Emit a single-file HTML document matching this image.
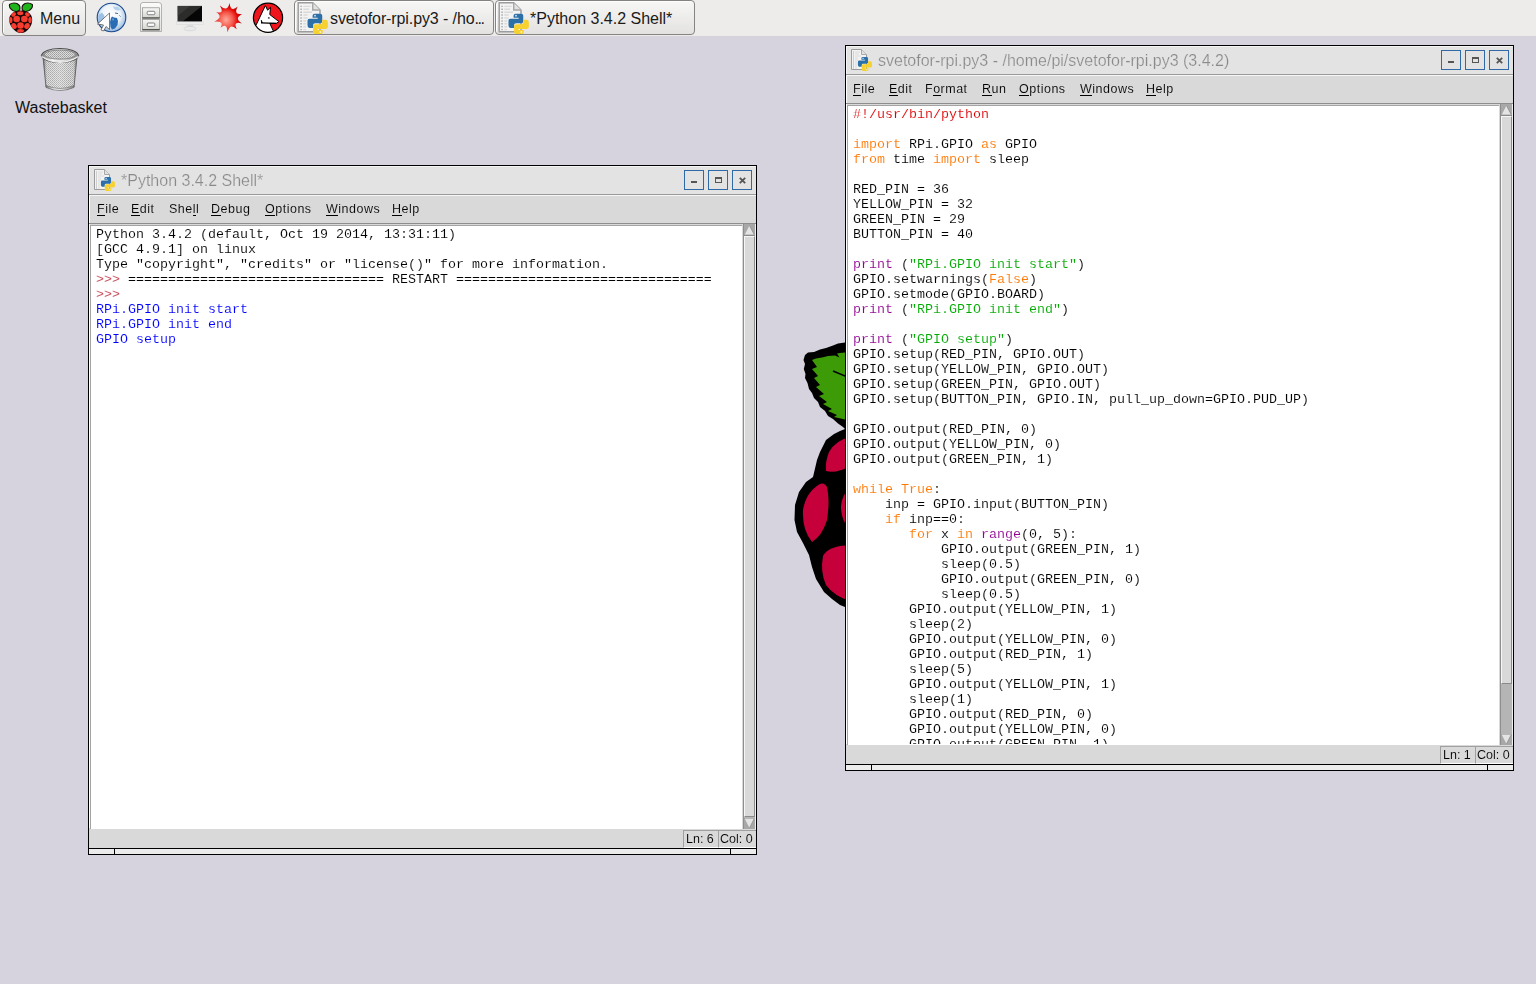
<!DOCTYPE html>
<html><head><meta charset="utf-8"><style>
*{margin:0;padding:0;box-sizing:border-box}
html,body{width:1536px;height:984px;overflow:hidden;background:#d6d3de;font-family:"Liberation Sans",sans-serif}
body{position:relative}
div,span,svg,pre{position:absolute}
#panel{left:0;top:0;width:1536px;height:36px;background:#edeceb}
.btn{border:1px solid #858483;border-radius:4px;background:linear-gradient(#f7f7f6,#e3e2e0);box-shadow:inset 1px 1px 0 #fdfdfd}
.ptxt{font-size:16px;color:#1a1a1a;white-space:nowrap}
.ttxt{font-size:16px;color:#8a8a8a;white-space:nowrap;-webkit-text-stroke:0.2px #e3e3e3;will-change:transform}
.wb{width:20px;height:20px;border:1px solid #2f6aa6}
.menu{font-size:12.5px;letter-spacing:0.5px;color:#000;white-space:nowrap;line-height:15px;-webkit-text-stroke:0.1px #d9d9d9;will-change:transform}
.menu u{text-decoration:none;background:linear-gradient(#000,#000) no-repeat 0 12.5px/100% 1px}
pre{font-family:"Liberation Mono",monospace;font-size:13.333px;line-height:15px;color:#000;white-space:pre;-webkit-text-stroke:0.1px #fff;will-change:transform}
.k{color:#ff7700}.b{color:#900090}.s{color:#00aa00}.c{color:#dd0000}.o{color:#0000ff}.p{color:#c03848}
.stat{font-size:12.5px;color:#000;white-space:nowrap;line-height:15px;-webkit-text-stroke:0.1px #d9d9d9;will-change:transform}
</style></head><body>

<div id="panel"></div>
<div class="btn" style="left:2px;top:0px;width:84px;height:36px"></div>
<svg style="left:8px;top:2px" width="26" height="32" viewBox="0 0 26 32">
 <path d="M1.5 2.5Q5 0 9 1.5Q12 3 12 6Q12 9 9 9.5Q5 9.5 3 7Q1 5 1.5 2.5Z" fill="#1db41d" stroke="#201010" stroke-width="1.1"/>
 <path d="M24.3 2.5Q21 0 17 1.5Q14 3 14 6Q14 9 17 9.5Q21 9.5 23 7Q25 5 24.3 2.5Z" fill="#1db41d" stroke="#201010" stroke-width="1.1"/>
 <path d="M13 8.5C19 8.5 24.5 11.5 24.2 18C24 24 21 27 18 29.5C16 31 14.5 31 13 31S10 31 8 29.5C5 27 1.5 24 1.2 18C1 11.5 7 8.5 13 8.5Z" fill="#1a0808"/>
 <g fill="#f53c2e"><ellipse cx="12.3" cy="11.3" rx="3.12" ry="1.98" transform="rotate(0 12.3 11.3)"/><ellipse cx="5.6" cy="12.6" rx="2.60" ry="1.88" transform="rotate(-35 5.6 12.6)"/><ellipse cx="19.4" cy="12.6" rx="2.60" ry="1.88" transform="rotate(35 19.4 12.6)"/><ellipse cx="8.7" cy="17" rx="3.33" ry="3.33" transform="rotate(0 8.7 17)"/><ellipse cx="16.4" cy="17" rx="3.33" ry="3.33" transform="rotate(0 16.4 17)"/><ellipse cx="2.7" cy="18" rx="1.77" ry="3.12" transform="rotate(0 2.7 18)"/><ellipse cx="22" cy="18" rx="1.77" ry="3.12" transform="rotate(0 22 18)"/><ellipse cx="12.5" cy="23.5" rx="3.33" ry="3.33" transform="rotate(0 12.5 23.5)"/><ellipse cx="6" cy="24" rx="2.60" ry="3.12" transform="rotate(-30 6 24)"/><ellipse cx="19" cy="24" rx="2.60" ry="3.12" transform="rotate(30 19 24)"/><ellipse cx="12.5" cy="28.8" rx="3.44" ry="1.88" transform="rotate(0 12.5 28.8)"/></g>
</svg>
<span class="ptxt" style="left:40px;top:10px">Menu</span>

<svg style="left:96px;top:2px" width="32" height="32" viewBox="0 0 32 32">
 <defs><radialGradient id="gl" cx="0.48" cy="0.42" r="0.6"><stop offset="0" stop-color="#ffffff"/><stop offset="0.55" stop-color="#eef4fa"/><stop offset="0.88" stop-color="#a9c6e6"/><stop offset="1" stop-color="#5b8ec8"/></radialGradient></defs>
 <circle cx="15.5" cy="15.5" r="14.3" fill="url(#gl)" stroke="#1a4a8c" stroke-width="1.1"/>
 <path d="M15 16L16 14.5L18 15.5L21 16L22 19L21.5 23L19 26.5L16 27.5L14.5 25L14 20Z" fill="#2a6cb4"/>
 <path d="M16 16.5L18 17L17 19Z" fill="#7fb0e0"/>
 <path d="M2.5 13L6 10.5L8.5 14L7.5 19L4 21.5L2.2 18Z" fill="#9cc0e6"/>
 <path d="M17 4.5L22 5L25 8L21 8.5L18 7Z" fill="#b7d0ea"/>
 <path d="M19 11l3 .6M23.5 13.5l1 1" stroke="#3a5a80" stroke-width="0.9"/>
 <path d="M13.5 11L13.5 27.5L10 24.5L7.5 29L5 28L7.5 23L1.5 22Z" fill="#fff" stroke="#444" stroke-width="0.7" stroke-linejoin="round"/>
</svg>

<svg style="left:139px;top:1px" width="24" height="33" viewBox="0 0 24 33">
 <defs><linearGradient id="fc" x1="0" y1="0" x2="0" y2="1"><stop offset="0" stop-color="#fbfbfa"/><stop offset="1" stop-color="#e2e2de"/></linearGradient>
 <linearGradient id="dr" x1="0" y1="0" x2="0" y2="1"><stop offset="0" stop-color="#f7f7f5"/><stop offset="1" stop-color="#d4d4d0"/></linearGradient></defs>
 <path d="M1.5 4Q1.5 1.5 4 1.5H19.5Q22.5 1.5 22.5 4V30.5H1.5Z" fill="url(#fc)" stroke="#a2a2a0" stroke-width="0.8"/>
 <rect x="3.4" y="6.8" width="17.2" height="10.4" fill="url(#dr)" stroke="#8a8a88" stroke-width="0.7"/>
 <path d="M3.4 16.9H20.6" stroke="#3e3e3e" stroke-width="1.1"/>
 <rect x="3.4" y="18.4" width="17.2" height="10.6" fill="url(#dr)" stroke="#8a8a88" stroke-width="0.7"/>
 <path d="M3.4 28.7H20.6" stroke="#3e3e3e" stroke-width="1.1"/>
 <rect x="8.2" y="10.3" width="7.6" height="3.4" rx="1" fill="#fcfcfc" stroke="#666" stroke-width="0.8"/>
 <rect x="8.2" y="22" width="7.6" height="3.4" rx="1" fill="#fcfcfc" stroke="#666" stroke-width="0.8"/>
</svg>

<svg style="left:176px;top:4px" width="28" height="28" viewBox="0 0 28 28">
 <rect x="0.8" y="1.2" width="26.4" height="17.4" fill="#efefef"/>
 <rect x="1.7" y="1.9" width="24.3" height="16" fill="#060606"/>
 <path d="M1.7 1.9H26L6 17.9H1.7Z" fill="#3a3a38" opacity="0.75"/>
 <path d="M1.7 1.9H14L1.7 12Z" fill="#4a4a48" opacity="0.5"/>
 <rect x="0.5" y="17.8" width="27" height="2.8" fill="#ececec" stroke="#d6d6d6" stroke-width="0.5"/>
 <path d="M10.5 20.6H17.5L16.8 23.2H11.2Z" fill="#dedede"/>
 <ellipse cx="14" cy="24.6" rx="6" ry="2.2" fill="#e9e9e9" stroke="#cdcdcd" stroke-width="0.6"/>
</svg>

<svg style="left:212px;top:2px" width="33" height="32" viewBox="0 0 33 32">
 <defs><radialGradient id="mm" cx="0.42" cy="0.58" r="0.55"><stop offset="0" stop-color="#ffa89c"/><stop offset="0.45" stop-color="#f55a4c"/><stop offset="0.75" stop-color="#e50a0a"/><stop offset="1" stop-color="#b80000"/></radialGradient></defs>
 <path d="M17.6 0.9Q18.6 10.9 25.8 4.6Q21.0 12.9 30.2 12.3Q21.8 16.0 29.8 21.4Q20.6 18.8 24.7 27.3Q18.1 20.4 15.6 30.2Q14.9 20.2 8.6 25.8Q12.6 18.3 2.4 19.6Q11.8 15.2 4.2 10.1Q12.9 12.5 7.9 3.5Q15.4 10.8 17.6 0.9Z" fill="url(#mm)"/>
</svg>

<svg style="left:252px;top:2px" width="32" height="32" viewBox="0 0 32 32">
 <defs><clipPath id="wc"><circle cx="16" cy="15.8" r="14.3"/></clipPath></defs>
 <circle cx="16" cy="15.8" r="14.6" fill="#f0141c"/>
 <g clip-path="url(#wc)">
  <path d="M13.4 3.5L15.6 8.2L18.5 5.3L17.8 12.6L26.9 19.6L24.3 21.4L17.8 21.4L22.3 31L0 31L0 26L4.2 22.9Z" fill="#fff" stroke="#000" stroke-width="1" stroke-linejoin="round"/>
 </g>
 <path d="M9 20.9L24.3 21.4M9.2 18.2L10 20.5" stroke="#000" stroke-width="1.1" fill="none"/>
 <ellipse cx="16.8" cy="15.9" rx="1" ry="0.6" fill="#000"/>
 <circle cx="16" cy="15.8" r="14.6" fill="none" stroke="#000" stroke-width="1.2"/>
</svg>

<div class="btn" style="left:294px;top:0px;width:200px;height:35px"></div>
<svg style="left:296px;top:2px" width="32" height="32" viewBox="0 0 22 22"><path d="M1.5 0.5H11.5L16.5 5.5V20.5H1.5Z" fill="#f3f3f3" stroke="#9c9c9c" stroke-width="1"/><path d="M11.5 0.5V5.5H16.5" fill="#e2e2e2" stroke="#a8a8a8" stroke-width="1"/><path d="M3 3h1M3 5h1M3 7h1M3 9h1M3 11h1M3 13h1M3 15h1M3 17h1M3 19h1" stroke="#a8a8a8" stroke-width="1"/><path d="M5 3h5M5 5h4M5 7h6M5 9h3M5 11h3M5 13h2M5 15h2M5 17h2M5 19h2" stroke="#dadada" stroke-width="1"/>
<g transform="translate(7.9,8) scale(0.7)"><path d="M7 0H12.5Q14.5 0 14.5 2V7.5Q14.5 9.5 12.5 9.5H7.5Q5.5 9.5 5.5 11.5V14H2Q0 14 0 11.5V7Q0 5 2 5H10V4H5V2Q5 0 7 0Z" fill="#2d70a8"/><circle cx="7.4" cy="2" r="0.9" fill="#d8e8f5"/><path transform="rotate(180 10 10)" d="M7 0H12.5Q14.5 0 14.5 2V7.5Q14.5 9.5 12.5 9.5H7.5Q5.5 9.5 5.5 11.5V14H2Q0 14 0 11.5V7Q0 5 2 5H10V4H5V2Q5 0 7 0Z" fill="#f6d130"/><circle cx="12.6" cy="18" r="0.9" fill="#fff6c8"/></g></svg>
<span class="ptxt" style="left:330px;top:10px;letter-spacing:-0.1px">svetofor-rpi.py3 - /ho<span style="position:static;letter-spacing:-1.5px">...</span></span>
<div class="btn" style="left:495px;top:0px;width:200px;height:35px"></div>
<svg style="left:497px;top:2px" width="32" height="32" viewBox="0 0 22 22"><path d="M1.5 0.5H11.5L16.5 5.5V20.5H1.5Z" fill="#f3f3f3" stroke="#9c9c9c" stroke-width="1"/><path d="M11.5 0.5V5.5H16.5" fill="#e2e2e2" stroke="#a8a8a8" stroke-width="1"/><path d="M3 3h1M3 5h1M3 7h1M3 9h1M3 11h1M3 13h1M3 15h1M3 17h1M3 19h1" stroke="#a8a8a8" stroke-width="1"/><path d="M5 3h5M5 5h4M5 7h6M5 9h3M5 11h3M5 13h2M5 15h2M5 17h2M5 19h2" stroke="#dadada" stroke-width="1"/>
<g transform="translate(7.9,8) scale(0.7)"><path d="M7 0H12.5Q14.5 0 14.5 2V7.5Q14.5 9.5 12.5 9.5H7.5Q5.5 9.5 5.5 11.5V14H2Q0 14 0 11.5V7Q0 5 2 5H10V4H5V2Q5 0 7 0Z" fill="#2d70a8"/><circle cx="7.4" cy="2" r="0.9" fill="#d8e8f5"/><path transform="rotate(180 10 10)" d="M7 0H12.5Q14.5 0 14.5 2V7.5Q14.5 9.5 12.5 9.5H7.5Q5.5 9.5 5.5 11.5V14H2Q0 14 0 11.5V7Q0 5 2 5H10V4H5V2Q5 0 7 0Z" fill="#f6d130"/><circle cx="12.6" cy="18" r="0.9" fill="#fff6c8"/></g></svg>
<span class="ptxt" style="left:530px;top:10px;letter-spacing:0px">*Python 3.4.2 Shell*</span>


<svg style="left:38px;top:46px" width="44" height="47" viewBox="0 0 44 47">
 <defs>
  <pattern id="mesh" width="2" height="2" patternUnits="userSpaceOnUse"><rect width="2" height="2" fill="#dcdcdc"/><rect width="1" height="1" fill="#9c9c9c"/><rect x="1" y="1" width="1" height="1" fill="#acacac"/></pattern>
  <linearGradient id="wbg" x1="0" x2="1"><stop offset="0" stop-color="#333" stop-opacity=".7"/><stop offset=".15" stop-color="#fff" stop-opacity=".1"/><stop offset=".5" stop-color="#fff" stop-opacity=".25"/><stop offset=".85" stop-color="#fff" stop-opacity=".05"/><stop offset="1" stop-color="#333" stop-opacity=".7"/></linearGradient>
  <linearGradient id="rim" x1="0" x2="1"><stop offset="0" stop-color="#7a7a7a"/><stop offset=".3" stop-color="#f4f4f4"/><stop offset=".6" stop-color="#e2e2e2"/><stop offset="1" stop-color="#808080"/></linearGradient>
 </defs>
 <path d="M5 11L8 41Q22 47 36 41L39 11Z" fill="url(#mesh)"/>
 <path d="M5 11L8 41Q22 47 36 41L39 11Z" fill="url(#wbg)" stroke="#5e5e5e" stroke-width="0.9"/>
 <path d="M8 39.5Q22 45.5 36 39.5L36 41.5Q22 47.5 8 41.5Z" fill="url(#rim)" stroke="#666" stroke-width="0.6"/>
 <ellipse cx="22" cy="9.5" rx="18.6" ry="7" fill="url(#rim)" stroke="#4a4a4a" stroke-width="1"/>
 <ellipse cx="22" cy="8.6" rx="15.6" ry="4.6" fill="url(#mesh)" stroke="#777" stroke-width="0.8"/>
 <path d="M3.6 10.5Q22 22 40.4 10.5" fill="none" stroke="#f0f0f0" stroke-width="1.4"/>
</svg>
<span class="ptxt" style="left:15px;top:99px;color:#111">Wastebasket</span>

<svg style="left:790px;top:338px" width="60" height="275" viewBox="790 338 60 275">
 <path d="M850 342L845 342.5L838 343.5L833 345.5L826 348L820 349.5L814 352L808 352.5L805 355L803.5 360L805 364L803.8 369L805.5 374L805 378L807.5 383L809 389L812 393L814 398L818 402L820 407L825 411L828 416L833 419L838 423.5L843 427L845 429L840 431L834 434L826 440L820 452L817 460L813 477L806 482L799 492L795 505L794.5 520L797 532L803 543L809 555L812 567L816 579L824 592L832 599L840 605L850 609Z" fill="#000"/>
 <path d="M850 352L845 352.5L840 353L837 353.5L839.5 357.5L835 355.5L828 356L822 357.5L816 358.5L812 360L817 367L812 369L818 376L814 378L820 385L816 387L824 394L819 396L827 402L823 404L832 409L828 411L837 415L834 417L843 419L850 421Z" fill="#3d9b07"/>
 <path d="M833 371L850 378" stroke="#000" stroke-width="1.5"/>
 <g fill="#c6003a">
  <path d="M850 437Q836 440 829 452Q825 462 826 471Q836 474 850 466Z"/>
  <path d="M820 484Q806 492 803 510Q802 530 812 542Q822 536 827 520Q830 500 827 487Q824 482 820 484Z"/>
  <path d="M850 487Q842 495 841 506Q841 516 845 523L850 524Z"/>
  <path d="M850 545Q828 546 823 556Q820 572 826 585Q834 596 850 601Z"/>
 </g>
</svg>

<div style="left:88px;top:165px;width:669px;height:690px;background:#d9d9d9;overflow:hidden">
<div style="left:0px;top:0px;width:669px;height:690px;background:transparent;border:1px solid #000"></div>
<div style="left:1px;top:1px;width:667px;height:28px;background:#e3e3e3;border-top:1px solid #f4f4f4;border-left:1px solid #f4f4f4"></div>
<div style="left:1px;top:29px;width:667px;height:1px;background:#9a9a9a;"></div>
<div style="left:1px;top:30px;width:667px;height:1px;background:#f6f6f6;"></div>
<svg style="left:5px;top:4px" width="22" height="22" viewBox="0 0 22 22"><path d="M1.5 0.5H11.5L16.5 5.5V20.5H1.5Z" fill="#f3f3f3" stroke="#9c9c9c" stroke-width="1"/><path d="M11.5 0.5V5.5H16.5" fill="#e2e2e2" stroke="#a8a8a8" stroke-width="1"/><path d="M3 3h1M3 5h1M3 7h1M3 9h1M3 11h1M3 13h1M3 15h1M3 17h1M3 19h1" stroke="#a8a8a8" stroke-width="1"/><path d="M5 3h5M5 5h4M5 7h6M5 9h3M5 11h3M5 13h2M5 15h2M5 17h2M5 19h2" stroke="#dadada" stroke-width="1"/>
<g transform="translate(7.9,8) scale(0.7)"><path d="M7 0H12.5Q14.5 0 14.5 2V7.5Q14.5 9.5 12.5 9.5H7.5Q5.5 9.5 5.5 11.5V14H2Q0 14 0 11.5V7Q0 5 2 5H10V4H5V2Q5 0 7 0Z" fill="#2d70a8"/><circle cx="7.4" cy="2" r="0.9" fill="#d8e8f5"/><path transform="rotate(180 10 10)" d="M7 0H12.5Q14.5 0 14.5 2V7.5Q14.5 9.5 12.5 9.5H7.5Q5.5 9.5 5.5 11.5V14H2Q0 14 0 11.5V7Q0 5 2 5H10V4H5V2Q5 0 7 0Z" fill="#f6d130"/><circle cx="12.6" cy="18" r="0.9" fill="#fff6c8"/></g></svg>
<span class="ttxt" style="left:33px;top:7px">*Python 3.4.2 Shell*</span>
<div class="wb" style="left:596px;top:5px"><div style="left:6px;top:10px;width:6px;height:2px;background:#555"></div></div>
<div class="wb" style="left:620px;top:5px"><div style="left:6px;top:6px;width:7px;height:6px;border:1px solid #555;border-top-width:2px"></div></div>
<div class="wb" style="left:644px;top:5px"><svg style="left:6px;top:6px" width="7" height="7" viewBox="0 0 7 7"><path d="M0.8 0.8L6.2 6.2M6.2 0.8L0.8 6.2" stroke="#555" stroke-width="1.8"/></svg></div>
<div style="left:1px;top:31px;width:667px;height:27px;background:#d9d9d9;border-left:1px solid #fff"></div>
<div style="left:1px;top:58px;width:667px;height:1px;background:#8e8e8e;"></div>
<span class="menu" style="left:9px;top:37px"><u>F</u>ile</span>
<span class="menu" style="left:43px;top:37px"><u>E</u>dit</span>
<span class="menu" style="left:80.5px;top:37px">She<u>l</u>l</span>
<span class="menu" style="left:123px;top:37px"><u>D</u>ebug</span>
<span class="menu" style="left:177px;top:37px"><u>O</u>ptions</span>
<span class="menu" style="left:238px;top:37px"><u>W</u>indows</span>
<span class="menu" style="left:304px;top:37px"><u>H</u>elp</span>
<div style="left:1px;top:59px;width:667px;height:604px;background:#d9d9d9;border-left:1px solid #fff"></div>
<div style="left:2px;top:60px;width:652px;height:604px;background:#fff;border-top:1px solid #a3a3a3;border-left:1px solid #a3a3a3"></div>
<div style="left:3px;top:61px;width:649px;height:602px;overflow:hidden"><pre style="left:5px;top:1px">Python 3.4.2 (default, Oct 19 2014, 13:31:11)
[GCC 4.9.1] on linux
Type "copyright", "credits" or "license()" for more information.
<span class="p" style="position:static">&gt;&gt;&gt;</span> ================================ RESTART ================================
<span class="p" style="position:static">&gt;&gt;&gt;</span> 
<span class="o" style="position:static">RPi.GPIO init start</span>
<span class="o" style="position:static">RPi.GPIO init end</span>
<span class="o" style="position:static">GPIO setup</span></pre></div>
<div style="left:655px;top:59px;width:13px;height:605px;background:#b5b5b5;border-left:1px solid #8e8e8e;border-right:1px solid #f0f0f0"></div>
<svg style="left:656px;top:59px" width="11" height="12" viewBox="0 0 11 12"><rect width="11" height="11" fill="#a8a8a8"/><path d="M5.5 1.5L10.2 10.5H0.8Z" fill="#e4e4e4"/><path d="M5.5 1.5L10.2 10.5" stroke="#8a8a8a" stroke-width="0.8"/><rect y="11" width="11" height="1" fill="#8a8a8a"/></svg>
<svg style="left:656px;top:653px" width="11" height="11" viewBox="0 0 11 11"><rect width="11" height="11" fill="#a8a8a8"/><path d="M0.8 0.8H10.2L5.5 10Z" fill="#e4e4e4"/><path d="M10.2 0.8L5.5 10" stroke="#8a8a8a" stroke-width="0.8"/></svg>
<div style="left:656px;top:71px;width:11px;height:581px;background:#d9d9d9;border-top:1px solid #f6f6f6;border-left:1px solid #f6f6f6;border-bottom:1px solid #8a8a8a;border-right:1px solid #8a8a8a"></div>
<div style="left:595px;top:665px;width:35px;height:18px;background:#d9d9d9;border-top:1px solid #a0a0a0;border-left:1px solid #a0a0a0;border-bottom:1px solid #fff"></div>
<div style="left:630px;top:665px;width:38px;height:18px;background:#d9d9d9;border-top:1px solid #a0a0a0;border-left:1px solid #a0a0a0;border-bottom:1px solid #fff"></div>
<span class="stat" style="left:598px;top:667px">Ln: 6</span>
<span class="stat" style="left:632px;top:667px">Col: 0</span>
<div style="left:0px;top:683px;width:669px;height:7px;background:#ececec;border:1px solid #000"></div>
<div style="left:26px;top:683px;width:1px;height:7px;background:#000;"></div>
<div style="left:642px;top:683px;width:1px;height:7px;background:#000;"></div>
</div>
<div style="left:845px;top:45px;width:669px;height:726px;background:#d9d9d9;overflow:hidden">
<div style="left:0px;top:0px;width:669px;height:726px;background:transparent;border:1px solid #000"></div>
<div style="left:1px;top:1px;width:667px;height:28px;background:#e3e3e3;border-top:1px solid #f4f4f4;border-left:1px solid #f4f4f4"></div>
<div style="left:1px;top:29px;width:667px;height:1px;background:#9a9a9a;"></div>
<div style="left:1px;top:30px;width:667px;height:1px;background:#f6f6f6;"></div>
<svg style="left:5px;top:4px" width="22" height="22" viewBox="0 0 22 22"><path d="M1.5 0.5H11.5L16.5 5.5V20.5H1.5Z" fill="#f3f3f3" stroke="#9c9c9c" stroke-width="1"/><path d="M11.5 0.5V5.5H16.5" fill="#e2e2e2" stroke="#a8a8a8" stroke-width="1"/><path d="M3 3h1M3 5h1M3 7h1M3 9h1M3 11h1M3 13h1M3 15h1M3 17h1M3 19h1" stroke="#a8a8a8" stroke-width="1"/><path d="M5 3h5M5 5h4M5 7h6M5 9h3M5 11h3M5 13h2M5 15h2M5 17h2M5 19h2" stroke="#dadada" stroke-width="1"/>
<g transform="translate(7.9,8) scale(0.7)"><path d="M7 0H12.5Q14.5 0 14.5 2V7.5Q14.5 9.5 12.5 9.5H7.5Q5.5 9.5 5.5 11.5V14H2Q0 14 0 11.5V7Q0 5 2 5H10V4H5V2Q5 0 7 0Z" fill="#2d70a8"/><circle cx="7.4" cy="2" r="0.9" fill="#d8e8f5"/><path transform="rotate(180 10 10)" d="M7 0H12.5Q14.5 0 14.5 2V7.5Q14.5 9.5 12.5 9.5H7.5Q5.5 9.5 5.5 11.5V14H2Q0 14 0 11.5V7Q0 5 2 5H10V4H5V2Q5 0 7 0Z" fill="#f6d130"/><circle cx="12.6" cy="18" r="0.9" fill="#fff6c8"/></g></svg>
<span class="ttxt" style="left:33px;top:7px">svetofor-rpi.py3 - /home/pi/svetofor-rpi.py3 (3.4.2)</span>
<div class="wb" style="left:596px;top:5px"><div style="left:6px;top:10px;width:6px;height:2px;background:#555"></div></div>
<div class="wb" style="left:620px;top:5px"><div style="left:6px;top:6px;width:7px;height:6px;border:1px solid #555;border-top-width:2px"></div></div>
<div class="wb" style="left:644px;top:5px"><svg style="left:6px;top:6px" width="7" height="7" viewBox="0 0 7 7"><path d="M0.8 0.8L6.2 6.2M6.2 0.8L0.8 6.2" stroke="#555" stroke-width="1.8"/></svg></div>
<div style="left:1px;top:31px;width:667px;height:27px;background:#d9d9d9;border-left:1px solid #fff"></div>
<div style="left:1px;top:58px;width:667px;height:1px;background:#8e8e8e;"></div>
<span class="menu" style="left:8px;top:37px"><u>F</u>ile</span>
<span class="menu" style="left:44px;top:37px"><u>E</u>dit</span>
<span class="menu" style="left:80px;top:37px">F<u>o</u>rmat</span>
<span class="menu" style="left:137px;top:37px"><u>R</u>un</span>
<span class="menu" style="left:174px;top:37px"><u>O</u>ptions</span>
<span class="menu" style="left:235px;top:37px"><u>W</u>indows</span>
<span class="menu" style="left:301px;top:37px"><u>H</u>elp</span>
<div style="left:1px;top:59px;width:667px;height:640px;background:#d9d9d9;border-left:1px solid #fff"></div>
<div style="left:2px;top:60px;width:652px;height:640px;background:#fff;border-top:1px solid #a3a3a3;border-left:1px solid #a3a3a3"></div>
<div style="left:3px;top:61px;width:649px;height:638px;overflow:hidden"><pre style="left:5px;top:1px"><span class="c" style="position:static">#!/usr/bin/python</span>

<span class="k" style="position:static">import</span> RPi.GPIO <span class="k" style="position:static">as</span> GPIO
<span class="k" style="position:static">from</span> time <span class="k" style="position:static">import</span> sleep

RED_PIN = 36
YELLOW_PIN = 32
GREEN_PIN = 29
BUTTON_PIN = 40

<span class="b" style="position:static">print</span> (<span class="s" style="position:static">"RPi.GPIO init start"</span>)
GPIO.setwarnings(<span class="k" style="position:static">False</span>)
GPIO.setmode(GPIO.BOARD)
<span class="b" style="position:static">print</span> (<span class="s" style="position:static">"RPi.GPIO init end"</span>)

<span class="b" style="position:static">print</span> (<span class="s" style="position:static">"GPIO setup"</span>)
GPIO.setup(RED_PIN, GPIO.OUT)
GPIO.setup(YELLOW_PIN, GPIO.OUT)
GPIO.setup(GREEN_PIN, GPIO.OUT)
GPIO.setup(BUTTON_PIN, GPIO.IN, pull_up_down=GPIO.PUD_UP)

GPIO.output(RED_PIN, 0)
GPIO.output(YELLOW_PIN, 0)
GPIO.output(GREEN_PIN, 1)

<span class="k" style="position:static">while</span> <span class="k" style="position:static">True</span>:
    inp = GPIO.input(BUTTON_PIN)
    <span class="k" style="position:static">if</span> inp==0:
       <span class="k" style="position:static">for</span> x <span class="k" style="position:static">in</span> <span class="b" style="position:static">range</span>(0, 5):
           GPIO.output(GREEN_PIN, 1)
           sleep(0.5)
           GPIO.output(GREEN_PIN, 0)
           sleep(0.5)
       GPIO.output(YELLOW_PIN, 1)
       sleep(2)
       GPIO.output(YELLOW_PIN, 0)
       GPIO.output(RED_PIN, 1)
       sleep(5)
       GPIO.output(YELLOW_PIN, 1)
       sleep(1)
       GPIO.output(RED_PIN, 0)
       GPIO.output(YELLOW_PIN, 0)
       GPIO.output(GREEN_PIN, 1)</pre></div>
<div style="left:655px;top:59px;width:13px;height:641px;background:#b5b5b5;border-left:1px solid #8e8e8e;border-right:1px solid #f0f0f0"></div>
<svg style="left:656px;top:59px" width="11" height="12" viewBox="0 0 11 12"><rect width="11" height="11" fill="#a8a8a8"/><path d="M5.5 1.5L10.2 10.5H0.8Z" fill="#e4e4e4"/><path d="M5.5 1.5L10.2 10.5" stroke="#8a8a8a" stroke-width="0.8"/><rect y="11" width="11" height="1" fill="#8a8a8a"/></svg>
<svg style="left:656px;top:689px" width="11" height="11" viewBox="0 0 11 11"><rect width="11" height="11" fill="#a8a8a8"/><path d="M0.8 0.8H10.2L5.5 10Z" fill="#e4e4e4"/><path d="M10.2 0.8L5.5 10" stroke="#8a8a8a" stroke-width="0.8"/></svg>
<div style="left:656px;top:71px;width:11px;height:568px;background:#d9d9d9;border-top:1px solid #f6f6f6;border-left:1px solid #f6f6f6;border-bottom:1px solid #8a8a8a;border-right:1px solid #8a8a8a"></div>
<div style="left:595px;top:701px;width:35px;height:18px;background:#d9d9d9;border-top:1px solid #a0a0a0;border-left:1px solid #a0a0a0;border-bottom:1px solid #fff"></div>
<div style="left:630px;top:701px;width:38px;height:18px;background:#d9d9d9;border-top:1px solid #a0a0a0;border-left:1px solid #a0a0a0;border-bottom:1px solid #fff"></div>
<span class="stat" style="left:598px;top:703px">Ln: 1</span>
<span class="stat" style="left:632px;top:703px">Col: 0</span>
<div style="left:0px;top:719px;width:669px;height:7px;background:#ececec;border:1px solid #000"></div>
<div style="left:26px;top:719px;width:1px;height:7px;background:#000;"></div>
<div style="left:642px;top:719px;width:1px;height:7px;background:#000;"></div>
</div>
</body></html>
